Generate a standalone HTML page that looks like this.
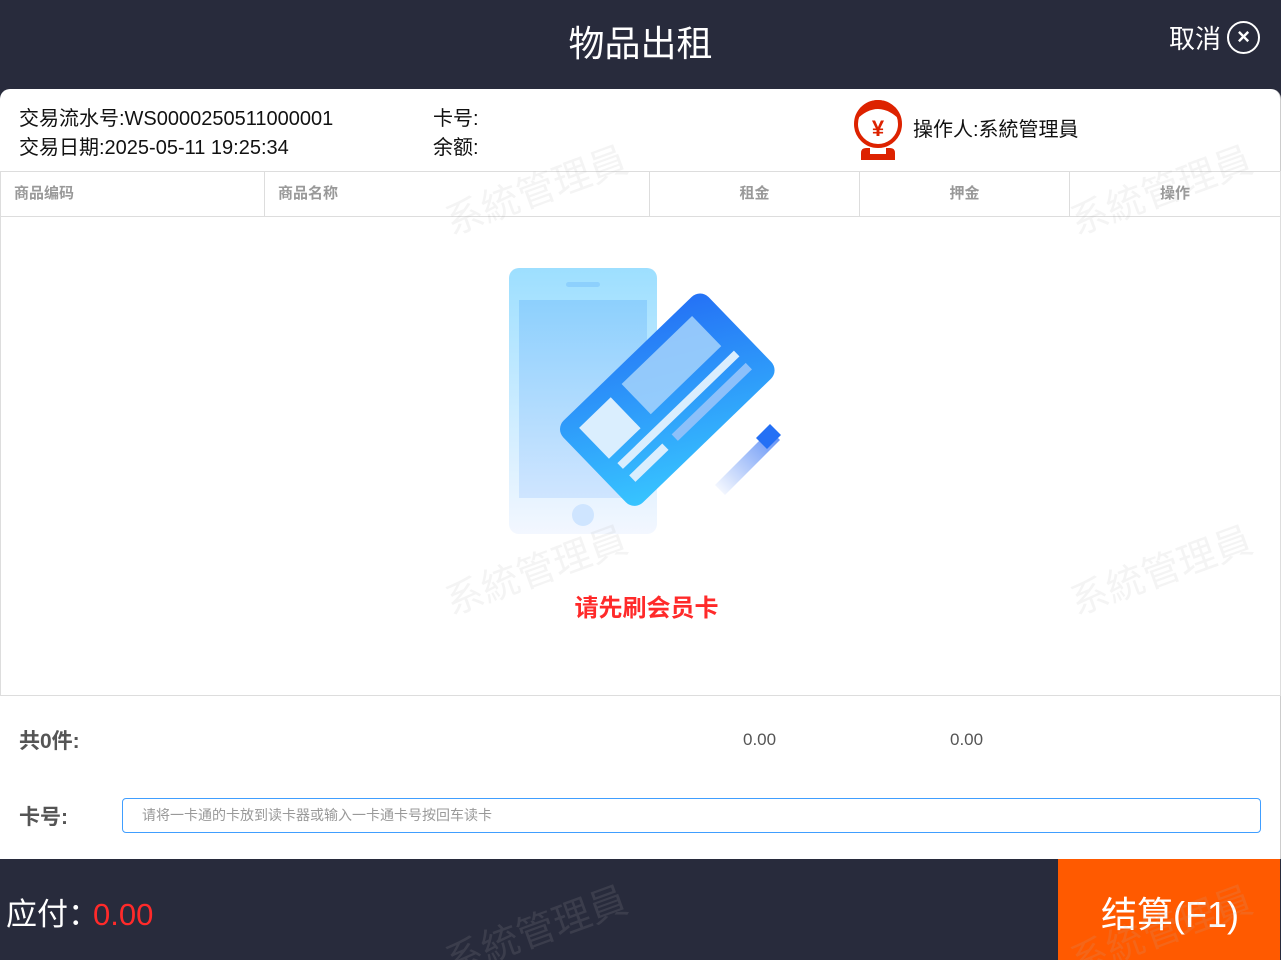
<!DOCTYPE html>
<html style="width:1281px;height:960px;overflow:hidden"><head><meta charset="utf-8"><style>
*{margin:0;padding:0;box-sizing:border-box}
body{width:1281px;height:960px;background:#282b3c;position:relative;overflow:hidden;font-family:"Liberation Sans","Noto Sans CJK SC",sans-serif}
.abs{position:absolute}
.title{left:0;width:1281px;top:20px;text-align:center;color:#fff;font-size:36px;line-height:48px}
.cancel{left:1169px;top:22px;color:#fff;font-size:26px;line-height:34px}
.xc{left:1227px;top:21px;width:33px;height:33px;border:2.5px solid #fff;border-radius:50%;color:#fff;font-size:22px;line-height:27px;text-align:center;font-weight:bold}
.main{left:0;top:89px;width:1281px;height:770px;background:#fff;border-radius:10px 10px 0 0;border-right:1px solid #ccc}
.t{font-size:20px;color:#111;line-height:28px}
.th{top:171px;height:46px;border:1px solid #ddd;border-left:none;font-size:15px;color:#999;font-weight:bold;line-height:44px}
.wm{color:rgba(180,180,180,.14);font-size:38px;transform:rotate(-20deg);white-space:nowrap}
</style></head><body>
<div class="abs title">物品出租</div>
<div class="abs cancel">取消</div>
<div class="abs xc">×</div>
<div class="abs main"></div>
<div class="abs t" style="left:19px;top:105px">交易流水号:WS0000250511000001</div>
<div class="abs t" style="left:19px;top:134px">交易日期:2025-05-11 19:25:34</div>
<div class="abs t" style="left:433px;top:105px">卡号:</div>
<div class="abs t" style="left:433px;top:134px">余额:</div>
<svg class="abs" style="left:852px;top:98px" width="52" height="64" viewBox="0 0 52 64">
<circle cx="26" cy="26" r="22" fill="#fff" stroke="#dd2200" stroke-width="4"/>
<path d="M4 22 Q26 0 48 22 L44 10 Q26 -6 8 10Z" fill="#dd2200"/>
<text x="26" y="38" text-anchor="middle" font-size="22" fill="#dd2200" font-family="Liberation Sans" font-weight="bold">¥</text>
<path d="M9 62 V55 Q9 50 14 50 H38 Q43 50 43 55 V62Z" fill="#dd2200"/>
<rect x="18" y="50" width="16" height="6" fill="#fff"/>
</svg>
<div class="abs t" style="left:913px;top:116px">操作人:系統管理員</div>
<div class="abs" style="left:0;top:171px;width:1281px;height:525px;border:1px solid #ddd"></div>
<div class="abs th" style="left:0;width:265px;padding-left:13px;border-left:1px solid #ddd">商品编码</div>
<div class="abs th" style="left:264px;width:386px;padding-left:13px;border-left:1px solid #ddd">商品名称</div>
<div class="abs th" style="left:649px;width:211px;text-align:center;border-left:1px solid #ddd">租金</div>
<div class="abs th" style="left:859px;width:211px;text-align:center;border-left:1px solid #ddd">押金</div>
<div class="abs th" style="left:1069px;width:212px;text-align:center;border-left:1px solid #ddd">操作</div>
<svg class="abs" style="left:490px;top:255px" width="310" height="290" viewBox="490 255 310 290">
<defs>
<linearGradient id="ph" x1="0" y1="0" x2="0" y2="1"><stop offset="0" stop-color="#9ddfff"/><stop offset="1" stop-color="#f3f7ff"/></linearGradient>
<linearGradient id="sc" x1="0" y1="0" x2="0" y2="1"><stop offset="0" stop-color="#8dd0fd"/><stop offset="1" stop-color="#cfe5ff"/></linearGradient>
<linearGradient id="cd" x1="0" y1="1" x2="1" y2="0"><stop offset="0" stop-color="#38c6ff"/><stop offset="1" stop-color="#2470f5"/></linearGradient>
<linearGradient id="st" x1="0" y1="1" x2="1" y2="0"><stop offset="0" stop-color="#fff"/><stop offset="1" stop-color="#5a8cf5"/></linearGradient>
</defs>
<rect x="509" y="268" width="148" height="266" rx="10" fill="url(#ph)"/>
<rect x="519" y="300" width="128" height="198" fill="url(#sc)"/>
<rect x="566" y="282" width="34" height="5" rx="2.5" fill="#8dd0fd"/>
<circle cx="583" cy="515" r="11" fill="#cfe5ff"/>
<g transform="rotate(-44 668 399)">
<rect x="566" y="342" width="202" height="114" rx="12" fill="url(#cd)"/>
<rect x="584" y="358" width="44" height="43" fill="#daeefe"/>
<rect x="645" y="356" width="98" height="42" fill="#a6d3fc" opacity=".85"/>
<rect x="587" y="410" width="162" height="8" fill="#daeefe"/>
<rect x="587" y="427" width="46" height="9" fill="#daeefe"/>
<rect x="646" y="427" width="103" height="9" fill="#8cc0fa"/>
</g>
<polygon points="715,485 770,430 780,440 725,495" fill="url(#st)"/>
<polygon points="756,438 770,424 781,435 767,449" fill="#2470f5"/>
</svg>
<div class="abs" style="left:0;width:1281px;top:588px;text-align:center;color:#ff2a2a;font-size:24px;font-weight:bold;padding-left:12px">请先刷会员卡</div>
<div class="abs" style="left:19px;top:725px;font-size:21px;font-weight:bold;color:#555">共0件:</div>
<div class="abs" style="left:743px;top:730px;font-size:17px;color:#555">0.00</div>
<div class="abs" style="left:950px;top:730px;font-size:17px;color:#555">0.00</div>
<div class="abs" style="left:19px;top:801px;font-size:21px;font-weight:bold;color:#555">卡号:</div>
<div class="abs" style="left:122px;top:798px;width:1139px;height:35px;border:1px solid #409eff;border-radius:4px;font-size:14px;color:#999;line-height:33px;padding-left:19px">请将一卡通的卡放到读卡器或输入一卡通卡号按回车读卡</div>
<div class="abs" style="left:1058px;top:859px;width:222px;height:101px;background:#ff5a00"></div>
<div class="abs" style="left:6px;top:889px;font-size:31px;color:#fff">应付：<span style="color:#ff2a2a;margin-left:-6px">0.00</span></div>
<div class="abs" style="left:1101px;top:886px;font-size:36px;color:#fff">结算(F1)</div>
<div class="abs wm" style="left:440px;top:160px">系統管理員</div>
<div class="abs wm" style="left:1065px;top:160px">系統管理員</div>
<div class="abs wm" style="left:440px;top:540px">系統管理員</div>
<div class="abs wm" style="left:1065px;top:540px">系統管理員</div>
<div class="abs wm" style="left:440px;top:900px">系統管理員</div>
<div class="abs wm" style="left:1065px;top:900px">系統管理員</div>
</body></html>
